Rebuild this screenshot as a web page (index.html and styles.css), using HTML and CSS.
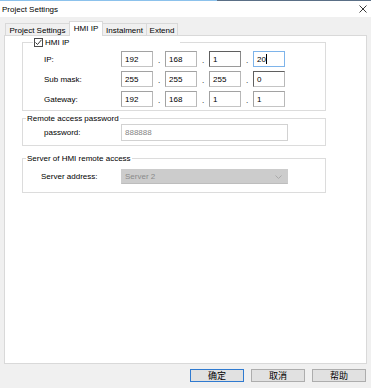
FILE: index.html
```html
<!DOCTYPE html>
<html>
<head>
<meta charset="utf-8">
<title>Project Settings</title>
<link rel="stylesheet" href="styles.css">
</head>
<body>
<div class="window">
  <div class="accent"></div>
  <div class="titlebar">
    <span class="title">Project Settings</span>
    <svg class="close" width="8" height="8" viewBox="0 0 8 8"><path d="M0.5 0.5 L7.5 7.5 M7.5 0.5 L0.5 7.5" stroke="#3a3a3a" stroke-width="1" fill="none"/></svg>
  </div>
  <div class="content">
    <div class="tabs">
      <div class="tab t1">Project Settings</div>
      <div class="tab t2 active">HMI IP</div>
      <div class="tab t3">Instalment</div>
      <div class="tab t4">Extend</div>
    </div>
    <div class="panel">
      <div class="group g1">
        <div class="legend check-legend">
          <span class="checkbox"><svg width="7" height="7" viewBox="0 0 7 7"><path d="M0.5 3.5 L2.5 5.5 L6.5 0.8" stroke="#333" stroke-width="1" fill="none"/></svg></span>
          <span>HMI IP</span>
        </div>
        <div class="ip-rows">
          <div class="ip-row">
            <span class="label">IP:</span>
            <div class="octet">192</div><span class="dot">.</span>
            <div class="octet">168</div><span class="dot">.</span>
            <div class="octet dark">1</div><span class="dot">.</span>
            <div class="octet focus">20<span class="caret"></span></div>
          </div>
          <div class="ip-row">
            <span class="label">Sub mask:</span>
            <div class="octet">255</div><span class="dot">.</span>
            <div class="octet">255</div><span class="dot">.</span>
            <div class="octet">255</div><span class="dot">.</span>
            <div class="octet dark-tl">0</div>
          </div>
          <div class="ip-row">
            <span class="label">Gateway:</span>
            <div class="octet">192</div><span class="dot">.</span>
            <div class="octet">168</div><span class="dot">.</span>
            <div class="octet">1</div><span class="dot">.</span>
            <div class="octet">1</div>
          </div>
        </div>
      </div>
      <div class="group g2">
        <div class="legend text-legend">Remote access password</div>
        <div class="field-row pw-row">
          <span class="label">password:</span>
          <div class="input">888888</div>
        </div>
      </div>
      <div class="group g3">
        <div class="legend text-legend">Server of HMI remote access</div>
        <div class="field-row srv-row">
          <span class="label wide">Server address:</span>
          <div class="combo">
            <span>Server 2</span>
            <svg width="7" height="4" viewBox="0 0 7 4"><path d="M0.5 0.5 L3.5 3.5 L6.5 0.5" stroke="#aaaaaa" stroke-width="1" fill="none"/></svg>
          </div>
        </div>
      </div>
    </div>
    <div class="buttons">
      <div class="btn primary">确定</div>
      <div class="btn">取消</div>
      <div class="btn">帮助</div>
    </div>
  </div>
</div>
</body>
</html>
```
FILE: styles.css
```css
* { box-sizing: border-box; }
html, body { margin: 0; padding: 0; }
body {
  width: 371px;
  height: 388px;
  overflow: hidden;
  background: #f0f0f0;
  font-family: "Liberation Sans", Arial, sans-serif;
  font-size: 8px;
  color: #000;
}
.accent {
  height: 1px;
  background: linear-gradient(to right, #8cc2ec 0, #8cc2ec 217px, #5a6f86 217px, #5a6f86 100%);
}
.titlebar {
  height: 16px;
  background: #fff;
  display: flex;
  align-items: center;
  justify-content: space-between;
  padding: 0 4px 0 2px;
}
.title { font-size: 8px; }
.close { display: block; }
.content { padding: 0 4px; }
.tabs {
  display: flex;
  align-items: flex-end;
  height: 18px;
  padding-left: 1px;
}
.tab {
  height: 12px;
  border: 1px solid #d9d9d9;
  border-bottom: 0;
  background: #f0f0f0;
  display: flex;
  align-items: center;
  justify-content: center;
  padding-top: 1px;
  white-space: nowrap;
}
.tab + .tab { margin-left: -1px; }
.t1 { width: 65px; }
.t2 { width: 34px; }
.t3 { width: 45px; }
.t4 { width: 32px; }
.tab.active {
  height: 15px;
  background: #fff;
  margin-bottom: -1px;
  position: relative;
  z-index: 1;
  padding-top: 0;
  padding-bottom: 2px;
}
.panel {
  height: 329px;
  background: #fff;
  border: 1px solid #d9d9d9;
  padding-top: 6px;
}
.group {
  width: 304px;
  margin-left: 17px;
  border: 1px solid #dcdcdc;
  display: flex;
  flex-direction: column;
}
.legend {
  height: 9px;
  margin-top: -5px;
  background: #fff;
  display: flex;
  align-items: center;
  white-space: nowrap;
}
.check-legend {
  margin-left: 10px;
  width: 147px;
  gap: 2px;
}
.checkbox {
  width: 9px;
  height: 9px;
  margin-left: 1px;
  border: 1px solid #4a4a4a;
  display: flex;
  align-items: center;
  justify-content: center;
  background: #fff;
}
.checkbox svg { display: block; }
.text-legend {
  align-self: flex-start;
  margin-left: 3px;
  padding: 0 1px;
}
.g1 { padding-bottom: 3px; }
.ip-rows {
  display: flex;
  flex-direction: column;
  gap: 4px;
  margin-top: 4px;
  padding-left: 21px;
}
.ip-row {
  display: flex;
  align-items: center;
  height: 16px;
}
.label { width: 77px; }
.label.wide { width: 80px; }
.octet {
  width: 32px;
  height: 16px;
  border: 1px solid #a2a2a2;
  border-right-color: #b8b8b8;
  border-bottom-color: #c4c4c4;
  padding-left: 3px;
  display: flex;
  align-items: center;
}
.octet.dark { border-color: #5f5f5f; border-right-color: #8a8a8a; border-bottom-color: #9a9a9a; }
.octet.dark-tl { border-top-color: #5f5f5f; border-left-color: #5f5f5f; }
.octet.focus { border-color: #7eb4ea; }
.caret {
  display: inline-block;
  width: 1px;
  height: 10px;
  background: #000;
  margin-left: 0;
}
.dot {
  width: 12px;
  text-align: center;
  align-self: flex-end;
  line-height: 10px;
  height: 12px;
  padding-top: 1px;
}
.g2 { margin-top: 7px; padding-bottom: 4px; }
.g3 { margin-top: 12px; padding-bottom: 8px; }
.field-row {
  display: flex;
  align-items: center;
}
.pw-row { margin-top: 1px; padding-left: 21px; }
.srv-row { margin-top: 6px; padding-left: 18px; }
.input {
  width: 167px;
  height: 17px;
  border: 1px solid #d2d2d2;
  color: #858585;
  padding-left: 3px;
  display: flex;
  align-items: center;
}
.combo {
  width: 167px;
  height: 15px;
  background: #cccccc;
  border: 1px solid #cccccc;
  border-bottom-color: #bdbdbd;
  color: #8a8a8a;
  padding: 0 5px 0 3px;
  display: flex;
  align-items: center;
  justify-content: space-between;
}
.combo svg { display: block; }
.buttons {
  display: flex;
  justify-content: flex-end;
  gap: 7px;
  padding: 5px 1px 0 0;
}
.btn {
  width: 54px;
  height: 13px;
  border: 1px solid #adadad;
  background: #e1e1e1;
  font-family: "Noto Sans CJK SC", "Liberation Sans", sans-serif;
  font-size: 9px;
  display: flex;
  align-items: center;
  justify-content: center;
  line-height: 1;
}
.btn.primary { border-color: #2f7ad0; }
```
